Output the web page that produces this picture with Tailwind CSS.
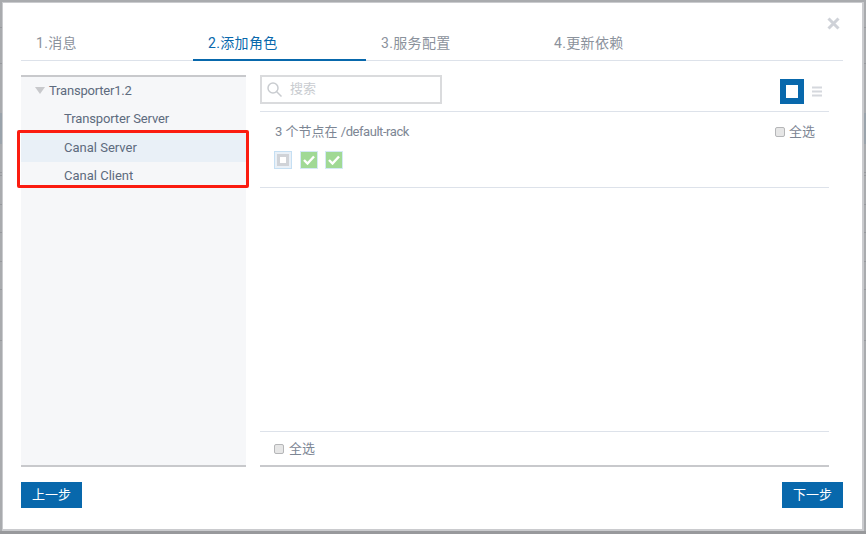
<!DOCTYPE html>
<html lang="en">

<head>
  <meta charset="UTF-8">
  <title>添加角色</title>
  <script src="https://cdn.jsdelivr.net/npm/@tailwindcss/browser@4"></script>
</head>

<body class="relative w-[866px] h-[534px] overflow-hidden bg-[#a9abae] font-['Roboto','Noto_Sans_CJK_SC',sans-serif]">
  <!-- page behind the overlay, only its edges show -->
  <div class="flex flex-col h-full">
    <div class="h-[28px] border-b border-[#97999d]"></div>
    <div class="h-[36px] border-b border-[#97999d]"></div>
    <div class="h-[49px]"></div>
    <div class="h-[31px] bg-[#9aa3ab]"></div>
    <div class="h-[29px] border-b border-[#97999d]"></div>
    <div class="h-[3px] border-b border-[#97999d]"></div>
    <div class="h-[29px] border-b border-[#97999d]"></div>
    <div class="h-[28px] border-b border-[#97999d]"></div>
    <div class="h-[29px] border-b border-[#97999d]"></div>
    <div class="h-[28px] border-b border-[#97999d]"></div>
    <div class="h-[51px] border-b border-[#97999d]"></div>
    <div class="flex-1"></div>
    <div class="h-[3px] bg-[#98999c]"></div>
  </div>

  <div class="absolute inset-0 pl-[2px] pt-[2px] pr-[2px] pb-[3px]">
    <!-- modal -->
    <div class="relative h-full bg-white pl-[18px] pr-[19px] border-l border-t border-r-2 border-b-2 border-[#cacbce]">
      <button class="absolute right-[22px] top-[14px] text-[#cfd2d8]">
        <svg class="block" width="13" height="13" viewBox="0 0 13 13" fill="none" stroke="currentColor" stroke-width="3"><path d="M1.5 1.5l10 10M11.5 1.5l-10 10" /></svg>
      </button>

      <div class="flex h-[58px] pt-[28px] border-b border-[#dde2ea] text-sm tracking-[0.35px]">
        <div class="w-[172px] pl-[15px] pt-[2px] text-[#8b929c]">1.消息</div>
        <div class="w-[173px] pl-[15px] pt-[2px] text-[#0868ac] border-b-2 border-[#0868ac] h-[30px]">2.添加角色</div>
        <div class="w-[173px] pl-[15px] pt-[2px] text-[#8b929c]">3.服务配置</div>
        <div class="w-[173px] pl-[15px] pt-[2px] text-[#8b929c]">4.更新依赖</div>
      </div>

      <div class="flex gap-[14px] mt-[14px] pr-[14px] h-[392px]">
        <!-- role tree -->
        <div class="w-[225px] bg-[#f6f7f9] border-t-2 border-b-2 border-[#c8c9cc] text-[13px] text-[#5d6b7e]">
          <div class="flex items-center h-[27px] pl-[14px] gap-[4px]">
            <span class="w-0 h-0 border-x-[5px] border-x-transparent border-t-[7px] border-t-[#c8c9cc]"></span>
            <span class="tracking-[-0.2px]">Transporter1.2</span>
          </div>
          <div class="flex items-center h-[29px] pl-[43px] tracking-[-0.12px]">Transporter Server</div>
          <div class="flex items-center h-[29px] pl-[43px] bg-[#e9f0f7]">Canal Server</div>
          <div class="flex items-center h-[28px] pl-[43px]">Canal Client</div>
        </div>

        <!-- hosts -->
        <div class="flex-1 flex flex-col border-b-2 border-[#c8c9cc]">
          <div class="flex justify-between h-[37px] border-b border-[#dde2ea]">
            <div class="flex items-center w-[182px] h-[29px] border-2 border-[#dadbdd] pl-[5px] gap-[8px]">
              <svg width="15" height="15" viewBox="0 0 15 15" fill="none" stroke="#c9ccd0" stroke-width="1.5"><circle cx="6" cy="6" r="5" /><path d="M9.5 9.5l5 5" /></svg>
              <span class="text-[13px] text-[#c9ccd0] -mt-[2px]">搜索</span>
            </div>
            <div class="flex items-center gap-[8px] pr-[7px] h-[29px]">
              <span class="flex items-center justify-center w-[24px] h-[25px] mt-[3px] bg-[#0868ac]"><span class="w-[12px] h-[13px] bg-white"></span></span>
              <svg class="mt-[3px]" width="10" height="11" viewBox="0 0 10 11" stroke="#d5d8dd" stroke-width="2"><path d="M0 1.5h10M0 5.5h10M0 9.5h10" /></svg>
            </div>
          </div>

          <div class="h-[76px] border-b border-[#dde2ea] pl-[15px] pr-[14px]">
            <div class="flex items-center justify-between h-[39px] text-[13px] text-[#7d8694]">
              <span>3 个节点在 <span class="tracking-[-0.45px]">/default-rack</span></span>
              <label class="flex items-center gap-[4px]"><span class="w-[10px] h-[10px] rounded-[2px] bg-[#e6e6e6] border border-[#b5b6b8]"></span>全选</label>
            </div>
            <div class="flex -ml-px gap-[8px]">
              <span class="flex items-center justify-center w-[18px] h-[18px] bg-[#e9f0f7] border border-[#c5dff3]"><span class="w-[12px] h-[12px] bg-white border-[3px] border-[#d0d3d8]"></span></span>
              <span class="flex items-center justify-center w-[18px] h-[18px] bg-[#a0d995] border border-[#d4e9f5]">
                <svg width="12" height="10" viewBox="0 0 12 10" fill="none" stroke="#fff" stroke-width="2.4"><path d="M1 5l3.5 3.5L11 1.5" /></svg>
              </span>
              <span class="flex items-center justify-center w-[18px] h-[18px] -ml-px bg-[#a0d995] border border-[#d4e9f5]">
                <svg width="12" height="10" viewBox="0 0 12 10" fill="none" stroke="#fff" stroke-width="2.4"><path d="M1 5l3.5 3.5L11 1.5" /></svg>
              </span>
            </div>
          </div>

          <div class="flex-1"></div>

          <div class="flex items-center h-[34px] pl-[14px] gap-[5px] border-t border-[#dde2ea] text-[13px] text-[#7d8694]">
            <span class="w-[10px] h-[10px] rounded-[2px] bg-[#e6e6e6] border border-[#b5b6b8]"></span>全选
          </div>
        </div>
      </div>

      <div class="flex justify-between mt-[15px]">
        <button class="w-[61px] h-[26px] bg-[#0868ac] text-white text-[13px]">上一步</button>
        <button class="w-[61px] h-[26px] bg-[#0868ac] text-white text-[13px]">下一步</button>
      </div>

      <!-- annotation -->
      <div class="absolute left-[14px] top-[127px] w-[232px] h-[58px] border-[3px] border-[#fb1c10] rounded-[2px]"></div>
    </div>
  </div>
</body>

</html>
